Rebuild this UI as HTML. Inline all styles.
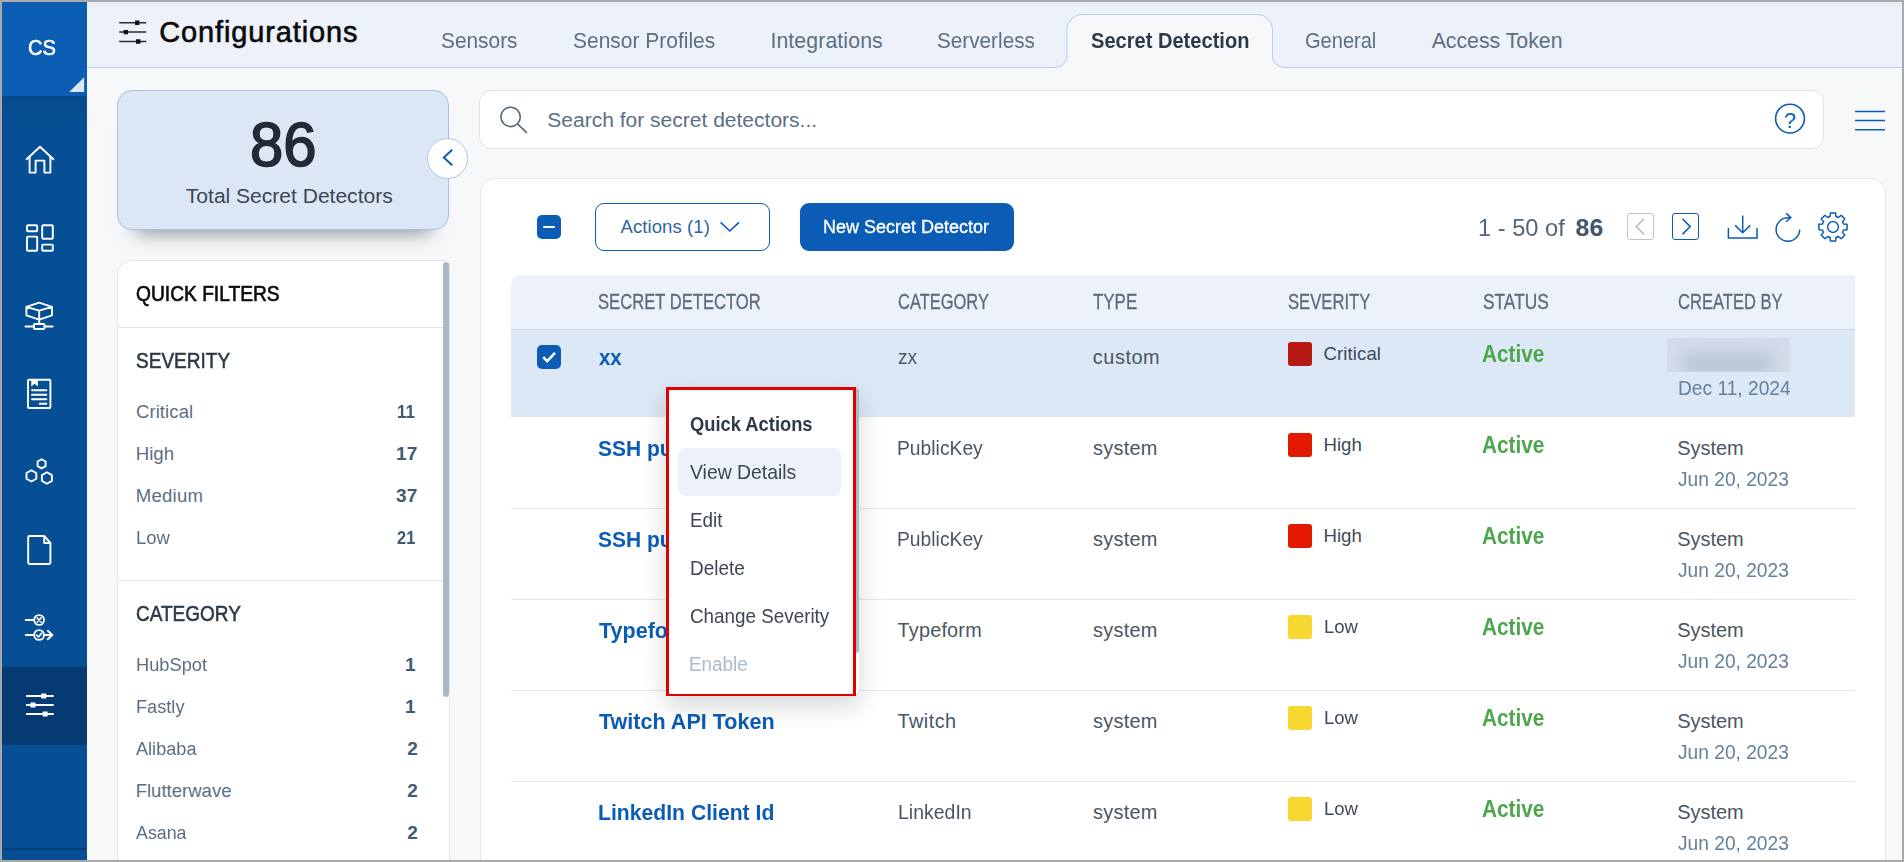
<!DOCTYPE html>
<html lang="en"><head><meta charset="utf-8"><title>Configurations - Secret Detection</title>
<style>
*{box-sizing:border-box;margin:0;padding:0}
html,body{width:1904px;height:862px;overflow:hidden;background:#a9a9a9;font-family:"Liberation Sans",sans-serif}
#app{position:absolute;left:0;top:0;width:1904px;height:862px;background:#f7f8fa;clip-path:inset(2px);overflow:hidden}
#app div,#app span,#app svg{position:absolute}
.t{white-space:nowrap;line-height:1;transform-origin:0 50%}
/* sidebar */
#side{left:0;top:0;width:87px;height:862px;background:#074f94}
#brand{left:0;top:0;width:87px;height:96px;background:#0a5db3}
#brandsh{left:0;top:96px;width:87px;height:22px;background:linear-gradient(#064a8c,#074f94)}
#active{left:0;top:667px;width:87px;height:78px;background:#063a72}
#sideline{left:0;top:848px;width:87px;height:2px;background:#06407c}
.ico{fill:none;stroke:#fff;stroke-width:1.9;stroke-linecap:round;stroke-linejoin:round}
/* header */
#hdr{left:87px;top:0;width:1817px;height:68px;background:linear-gradient(#e6ebf3 2px,#edf2fa 8px);border-bottom:1px solid #b9d1ea}
/* left */
#stat{left:117px;top:90px;width:332px;height:140px;background:#dbe7f4;border:1px solid #a3c2e6;border-radius:15px;box-shadow:0 22px 18px -19px rgba(30,40,55,.5)}
#collapse{left:427px;top:138px;width:41px;height:41px;border-radius:50%;background:#fff;border:1px solid #a9c6e8}
#qf{left:117px;top:260px;width:333px;height:620px;background:#fff;border:1px solid #e3e8ec;border-radius:15px 0 0 0}
#qfthumb{left:443px;top:262px;width:6px;height:435px;background:#a9b9c6;border-radius:3px}
.hr{height:1px;background:#dfe5ea}
/* search */
#search{left:479px;top:90px;width:1345px;height:59px;background:#fff;border:1px solid #dde4ea;border-radius:12px}
/* card */
#card{left:480px;top:178px;width:1406px;height:720px;background:#fff;border:1px solid #e3e8ec;border-radius:16px}
#thead{left:511px;top:275px;width:1344px;height:55px;background:#edf2fa;border-radius:10px 0 0 0;border-bottom:1px solid #c2d6ec}
#rowsel{left:511px;top:330px;width:1344px;height:87px;background:#dce8f5}
.rl{left:511px;width:1344px;height:1px;background:#e4e9ed}
.sq{width:24px;height:24px;border-radius:3px}
/* popup */
#pop{left:666px;top:387px;width:193px;height:309px;background:#fff;border-radius:0 6px 8px 0;box-shadow:0 10px 24px rgba(30,40,50,.19)}
#popthumb{left:855px;top:388px;width:4px;height:265px;background:#abbac7;border-radius:0 3px 3px 0}
#popred{left:666px;top:387px;width:190px;height:309px;border:3px solid #e00000;border-bottom-width:2px}
#pophl{left:678px;top:448px;width:163px;height:48px;background:#edf2fa;border-radius:8px}
</style></head><body><div id="app">
<!-- SIDEBAR -->
<div id="side"></div><div id="brand"></div><div id="brandsh"></div><div id="active"></div><div id="sideline"></div>
<svg style="left:69px;top:77px" width="16" height="16" viewBox="0 0 16 16"><path d="M15.1 .2V15.1H.2Z" fill="#dce7f4"/></svg>
<svg class="ico" style="left:0;top:130px" width="87" height="600" viewBox="0 130 87 600">
<!-- home -->
<path d="M26.6 159.2L40 146.8L53.4 159.2"/><path d="M29.6 157V172.6H35.6V160.6H44.4V172.6H50.4V157"/>
<!-- dashboard -->
<rect x="27" y="225.2" width="10.2" height="6" rx="1"/><rect x="27" y="236.6" width="10.2" height="14.2" rx="1"/><rect x="42.2" y="225.2" width="10.6" height="13.6" rx="1"/><rect x="42.2" y="244.6" width="10.6" height="6.2" rx="1"/>
<!-- network cube -->
<path d="M39.2 302.6L52 306.8V315.4L39.2 319.6L26.4 315.4V306.8ZM26.4 306.8L39.2 310.6L52 306.8M39.2 310.6V324"/><path d="M25.6 326.5H33.8M44.6 326.5H52.6"/><rect x="33.9" y="324" width="10.6" height="5" rx="1"/>
<!-- document -->
<rect x="28" y="379.8" width="22.4" height="28.2" rx="1"/><path d="M31.3 380V386.6L34.6 383.8L37.9 386.6V380Z" fill="#fff" stroke="none"/><path d="M32 390.2H46.4M32 394.8H46.4M32 399.2H46.4M39.8 403.8H46.4"/>
<!-- hexagons -->
<path d="M41.6 459.2L45.6 461.5V466.1L41.6 468.4L37.6 466.1V461.5Z"/><path d="M31.4 470.2L36.3 473V478.7L31.4 481.5L26.5 478.7V473Z"/><path d="M46.9 472.2L51.9 475.1V480.9L46.9 483.8L41.9 480.9V475.1Z"/>
<!-- file -->
<path d="M44.2 536H29.6Q28.2 536 28.2 537.4V562.6Q28.2 564 29.6 564H49Q50.4 564 50.4 562.6V543ZM44.2 536V543H50.4"/>
<!-- flow -->
<circle cx="39.1" cy="620" r="4.9"/><path d="M25.8 620H34.2"/><path d="M37.1 618L41.1 622M41.1 618L37.1 622" stroke-width="1.7"/>
<circle cx="39.1" cy="635" r="4.9"/><path d="M25.8 635H34.2M44 635H52.2M47.8 630.8L52.4 635L47.8 639.2"/><path d="M36.8 635.2L38.5 637L41.6 633.2" stroke-width="1.6"/>
<!-- sliders -->
<path d="M26.8 696H53M26.8 705H53M26.8 714H53"/><path d="M41.2 693.5h5v5h-5zM30.5 702.5h5v5h-5zM42.7 711.5h5v5h-5z" fill="#fff" stroke="none"/>
</svg>
<!-- HEADER -->
<div id="hdr"></div>
<svg style="left:117px;top:18px" width="32" height="28" viewBox="117 18 32 28"><path d="M119.2 22.7H146.2M119.2 32.1H146.2M119.2 41.5H146.2" stroke="#2a2a2a" stroke-width="1.5" fill="none"/><path d="M135 20.5h4.4v4.4H135zM123.6 29.9h4.4v4.4h-4.4zM136 39.3h4.4v4.4H136z" fill="#111"/></svg>
<!-- active tab shape -->
<svg style="left:1040px;top:10px" width="260" height="60" viewBox="1040 10 260 60"><path d="M1054 67.500A13 10.500 0 0 0 1067 57V29.500A15 15 0 0 1 1082 14.500H1257.500A15 15 0 0 1 1272.500 29.500V57A13 10.500 0 0 0 1285.500 67.500V70H1054Z" fill="#f7f8fa"/><path d="M1053 67.500H1054A13 10.500 0 0 0 1067 57V29.500A15 15 0 0 1 1082 14.500H1257.500A15 15 0 0 1 1272.500 29.500V57A13 10.500 0 0 0 1285.500 67.500H1287" fill="none" stroke="#b3cdea" stroke-width="1"/></svg>
<!-- LEFT PANEL -->
<div id="stat"></div>
<div id="collapse"></div>
<svg style="left:437px;top:145px" width="22" height="26" viewBox="437 145 22 26"><path d="M452.2 149.7L443.8 157.5L452.2 165.3" fill="none" stroke="#0b5cb5" stroke-width="2"/></svg>
<div id="qf"></div>
<div id="qfthumb"></div>
<div class="hr" style="left:118px;top:327px;width:325px"></div>
<div class="hr" style="left:118px;top:580px;width:325px"></div>
<!-- SEARCH -->
<div id="search"></div>
<svg style="left:496px;top:102px" width="36" height="36" viewBox="496 102 36 36"><circle cx="510.600" cy="116.900" r="9.700" fill="none" stroke="#52667a" stroke-width="1.600"/><path d="M517.500 123.800L526.900 132.800" stroke="#52667a" stroke-width="1.600" fill="none"/></svg>
<svg style="left:1772px;top:101px" width="36" height="36" viewBox="1772 101 36 36"><circle cx="1790" cy="118.6" r="14.4" fill="none" stroke="#0b5cb5" stroke-width="1.6"/></svg>
<svg style="left:1853px;top:108px" width="34" height="26" viewBox="1853 108 34 26"><path d="M1855 111.500H1885M1855 120.500H1885M1855 129.700H1885" stroke="#0b5cb5" stroke-width="1.600" fill="none"/></svg>
<!-- CARD -->
<div id="card"></div>
<div style="left:537px;top:215px;width:24px;height:24px;border-radius:5px;background:#0b5cb5"></div>
<div style="left:543px;top:226px;width:12px;height:2.400px;background:#fff;border-radius:1px"></div>
<div style="left:595px;top:203px;width:175px;height:48px;border:1.500px solid #0b5cb5;border-radius:9px;background:#fff"></div>
<svg style="left:718px;top:218px" width="24" height="18" viewBox="718 218 24 18"><path d="M720.600 222.400L729.800 231L739 222.400" fill="none" stroke="#0b5cb5" stroke-width="1.600"/></svg>
<div style="left:800px;top:203px;width:214px;height:48px;border-radius:9px;background:#0b5cb5"></div>
<div style="left:1627px;top:213px;width:27px;height:27px;border:1.500px solid #b9c6d0;border-radius:3px"></div>
<svg style="left:1627px;top:213px" width="27" height="27" viewBox="0 0 27 27"><path d="M17 5.800L9.200 13.600L17 21.400" fill="none" stroke="#b0bec9" stroke-width="1.500"/></svg>
<div style="left:1672px;top:213px;width:27px;height:27px;border:1.500px solid #0b5cb5;border-radius:3px"></div>
<svg style="left:1672px;top:213px" width="27" height="27" viewBox="0 0 27 27"><path d="M10.400 5.800L18.200 13.600L10.400 21.400" fill="none" stroke="#0b5cb5" stroke-width="1.500"/></svg>
<!-- download -->
<svg style="left:1724px;top:210px" width="36" height="34" viewBox="1724 210 36 34"><path d="M1728.400 228V238H1757V228M1742.700 215.400V232.600M1735.200 225.400L1742.700 232.800L1750.200 225.400" fill="none" stroke="#0b5cb5" stroke-width="1.500"/></svg>
<!-- refresh -->
<svg style="left:1772px;top:210px" width="34" height="36" viewBox="1772 210 34 36"><path d="M1799.700 229.500A11.800 11.800 0 1 1 1787.900 217.700H1790.200M1786.200 213.400L1790.800 217.600L1786.200 221.800" fill="none" stroke="#0b5cb5" stroke-width="1.500"/></svg>
<!-- gear -->
<svg id="gear" style="left:1816px;top:210px" width="34" height="34" viewBox="-17 -17 34 34"><circle r="5.4" fill="none" stroke="#0b5cb5" stroke-width="1.500"/><path d="M-2.91 -10.51L-2.63 -14.06L2.63 -14.06L2.91 -10.51A10.9 10.9 0 0 1 5.37 -9.48L8.08 -11.80L11.80 -8.08L9.48 -5.37A10.9 10.9 0 0 1 10.51 -2.91L14.06 -2.63L14.06 2.63L10.51 2.91A10.9 10.9 0 0 1 9.48 5.37L11.80 8.08L8.08 11.80L5.37 9.48A10.9 10.9 0 0 1 2.91 10.51L2.63 14.06L-2.63 14.06L-2.91 10.51A10.9 10.9 0 0 1 -5.37 9.48L-8.08 11.80L-11.80 8.08L-9.48 5.37A10.9 10.9 0 0 1 -10.51 2.91L-14.06 2.63L-14.06 -2.63L-10.51 -2.91A10.9 10.9 0 0 1 -9.48 -5.37L-11.80 -8.08L-8.08 -11.80L-5.37 -9.48A10.9 10.9 0 0 1 -2.91 -10.51Z" fill="none" stroke="#0b5cb5" stroke-width="1.500" stroke-linejoin="round"/></svg>
<!-- TABLE -->
<div id="thead"></div><div id="rowsel"></div>
<div style="left:537px;top:345px;width:24px;height:24px;border-radius:5px;background:#0b5cb5"></div>
<svg style="left:537px;top:345px" width="24" height="24" viewBox="0 0 24 24"><path d="M6.200 12.200L10.200 16.200L18 7.800" fill="none" stroke="#fff" stroke-width="2.600"/></svg>
<!-- ROW SHAPES -->
<div class="sq" style="left:1288px;top:342px;background:#b71a15"></div>
<div style="left:1667px;top:338px;width:123px;height:34px;background:#d2dde9;overflow:hidden"><div style="left:14px;top:14px;width:92px;height:22px;background:#bac7d5;filter:blur(7px);border-radius:10px"></div></div>
<div class="sq" style="left:1288px;top:433px;background:#e11900"></div>
<div class="rl" style="top:508px"></div>
<div class="sq" style="left:1288px;top:524px;background:#e11900"></div>
<div class="rl" style="top:599px"></div>
<div class="sq" style="left:1288px;top:615px;background:#f8d830"></div>
<div class="rl" style="top:690px"></div>
<div class="sq" style="left:1288px;top:706px;background:#f8d830"></div>
<div class="rl" style="top:781px"></div>
<div class="sq" style="left:1288px;top:797px;background:#f8d830"></div>
<!-- TEXT -->
<span class="t" id="cs" style="left:27.9px;top:37px;font-size:21.84px;color:#fff;-webkit-text-stroke:0.6px #fff;transform:scaleX(0.922)">CS</span>
<span class="t" id="title" style="left:159.15px;top:18px;font-size:28.96px;color:#0a0a0a;-webkit-text-stroke:0.6px #0a0a0a;letter-spacing:0.904px">Configurations</span>
<span class="t" id="tb1" style="left:441.15px;top:31px;font-size:21.29px;color:#5c6f82;transform:scaleX(0.98)">Sensors</span>
<span class="t" id="tb2" style="left:573.15px;top:31px;font-size:21.29px;color:#5c6f82;transform:scaleX(0.986)">Sensor Profiles</span>
<span class="t" id="tb3" style="left:770.4px;top:31px;font-size:21.25px;color:#5c6f82;letter-spacing:0.114px">Integrations</span>
<span class="t" id="tb4" style="left:937.15px;top:31px;font-size:21.26px;color:#5c6f82;transform:scaleX(0.975)">Serverless</span>
<span class="t" id="tb5" style="left:1091.28px;top:31px;font-size:21.28px;color:#2c3a49;font-weight:bold;transform:scaleX(0.944)">Secret Detection</span>
<span class="t" id="tb6" style="left:1304.65px;top:31px;font-size:21.29px;color:#5c6f82;transform:scaleX(0.942)">General</span>
<span class="t" id="tb7" style="left:1431.65px;top:31px;font-size:21.32px;color:#5c6f82;letter-spacing:-0.023px">Access Token</span>
<span class="t" id="n86" style="left:250.1px;top:113px;font-size:63.04px;color:#222b33;-webkit-text-stroke:1.7px #222b33;transform:scaleX(0.947)">86</span>
<span class="t" id="tsd" style="left:185.85px;top:185px;font-size:21.09px;color:#3b4654;letter-spacing:-0.024px">Total Secret Detectors</span>
<span class="t" id="qft" style="left:135.6px;top:283px;font-size:21.78px;color:#0c0c0c;-webkit-text-stroke:0.65px #0c0c0c;transform:scaleX(0.882)">QUICK FILTERS</span>
<span class="t" id="sevh" style="left:135.65px;top:350px;font-size:21.63px;color:#2c3a48;-webkit-text-stroke:0.55px #2c3a48;transform:scaleX(0.88)">SEVERITY</span>
<span class="t" id="cath" style="left:135.6px;top:603px;font-size:21.63px;color:#2c3a48;-webkit-text-stroke:0.55px #2c3a48;transform:scaleX(0.879)">CATEGORY</span>
<span class="t" id="f0" style="left:135.95px;top:403px;font-size:18.57px;color:#5c6f82;letter-spacing:0.071px">Critical</span>
<span class="t" id="g0" style="left:396.55px;top:402px;font-size:19.05px;color:#425b74;font-weight:bold;transform:scaleX(0.892)">11</span>
<span class="t" id="f1" style="left:135.7px;top:445px;font-size:18.64px;color:#5c6f82">High</span>
<span class="t" id="g1" style="left:396.05px;top:444px;font-size:19.05px;color:#425b74;font-weight:bold;transform:scaleX(1)">17</span>
<span class="t" id="f2" style="left:135.7px;top:487px;font-size:18.59px;color:#5c6f82;letter-spacing:0.25px">Medium</span>
<span class="t" id="g2" style="left:396.05px;top:486px;font-size:19.05px;color:#425b74;font-weight:bold;transform:scaleX(1)">37</span>
<span class="t" id="f3" style="left:135.95px;top:529px;font-size:18.68px;color:#5c6f82;transform:scaleX(0.992)">Low</span>
<span class="t" id="g3" style="left:396.8px;top:528px;font-size:19.05px;color:#425b74;font-weight:bold;transform:scaleX(0.863)">21</span>
<span class="t" id="f4" style="left:135.95px;top:656px;font-size:18.66px;color:#5c6f82;transform:scaleX(0.979)">HubSpot</span>
<span class="t" id="g4" style="left:405.1px;top:655px;font-size:19.05px;color:#425b74;font-weight:bold">1</span>
<span class="t" id="f5" style="left:135.95px;top:698px;font-size:18.59px;color:#5c6f82;transform:scaleX(0.979)">Fastly</span>
<span class="t" id="g5" style="left:405.1px;top:697px;font-size:19.05px;color:#425b74;font-weight:bold">1</span>
<span class="t" id="f6" style="left:135.7px;top:740px;font-size:18.58px;color:#5c6f82;transform:scaleX(0.976)">Alibaba</span>
<span class="t" id="g6" style="left:407.35px;top:739px;font-size:19.05px;color:#425b74;font-weight:bold">2</span>
<span class="t" id="f7" style="left:135.7px;top:782px;font-size:18.55px;color:#5c6f82">Flutterwave</span>
<span class="t" id="g7" style="left:407.35px;top:781px;font-size:19.05px;color:#425b74;font-weight:bold">2</span>
<span class="t" id="f8" style="left:135.7px;top:824px;font-size:18.61px;color:#5c6f82;transform:scaleX(0.957)">Asana</span>
<span class="t" id="g8" style="left:407.35px;top:823px;font-size:19.05px;color:#425b74;font-weight:bold">2</span>
<span class="t" id="srch" style="left:547.3px;top:109px;font-size:21.02px;color:#5c6f82">Search for secret detectors...</span>
<span class="t" id="q" style="left:1784.2px;top:110px;font-size:21.8px;color:#0b5cb5;transform:scaleX(1.001)">?</span>
<span class="t" id="act" style="left:620.45px;top:218px;font-size:18.51px;color:#2f64a3;letter-spacing:0.1px">Actions (1)</span>
<span class="t" id="nsd" style="left:823.05px;top:218px;font-size:18.23px;color:#fff;-webkit-text-stroke:0.35px #fff;transform:scaleX(0.988)">New Secret Detector</span>
<span class="t" id="pg1" style="left:1477.8px;top:216px;font-size:24.36px;color:#52667a;transform:scaleX(0.971)">1 - 50 of</span>
<span class="t" id="pg2" style="left:1575.5px;top:216px;font-size:24.72px;color:#44566a;font-weight:bold;letter-spacing:0.25px">86</span>
<span class="t" id="h1" style="left:597.85px;top:291px;font-size:21.91px;color:#5c6b7a;-webkit-text-stroke:0.3px #5c6b7a;transform:scaleX(0.758)">SECRET DETECTOR</span>
<span class="t" id="h2" style="left:898.35px;top:291px;font-size:21.91px;color:#5c6b7a;-webkit-text-stroke:0.3px #5c6b7a;transform:scaleX(0.752)">CATEGORY</span>
<span class="t" id="h3" style="left:1092.6px;top:291px;font-size:21.91px;color:#5c6b7a;-webkit-text-stroke:0.3px #5c6b7a;transform:scaleX(0.772)">TYPE</span>
<span class="t" id="h4" style="left:1287.85px;top:291px;font-size:21.91px;color:#5c6b7a;-webkit-text-stroke:0.3px #5c6b7a;transform:scaleX(0.76)">SEVERITY</span>
<span class="t" id="h5" style="left:1482.85px;top:291px;font-size:21.91px;color:#5c6b7a;-webkit-text-stroke:0.3px #5c6b7a;transform:scaleX(0.791)">STATUS</span>
<span class="t" id="h6" style="left:1678.35px;top:291px;font-size:21.91px;color:#5c6b7a;-webkit-text-stroke:0.3px #5c6b7a;transform:scaleX(0.756)">CREATED BY</span>
<span class="t" id="n0" style="left:598.58px;top:347px;font-size:22.5px;color:#0b5cb5;font-weight:bold;transform:scaleX(0.908)">xx</span>
<span class="t" id="c0" style="left:897.85px;top:348px;font-size:19.75px;color:#4a5662;transform:scaleX(0.973)">zx</span>
<span class="t" id="y0" style="left:1092.8px;top:348px;font-size:19.9px;color:#4a5662;letter-spacing:0.55px">custom</span>
<span class="t" id="s0" style="left:1323.5px;top:345px;font-size:18.57px;color:#3f4a55;letter-spacing:0.107px">Critical</span>
<span class="t" id="a0" style="left:1481.9px;top:343px;font-size:23.72px;color:#4ca64c;font-weight:bold;transform:scaleX(0.875)">Active</span>
<span class="t" id="d0" style="left:1677.85px;top:379px;font-size:19.91px;color:#65809a;transform:scaleX(0.963)">Dec 11, 2024</span>
<span class="t" id="n1" style="left:597.95px;top:437px;font-size:22.67px;color:#0b5cb5;font-weight:bold;transform:scaleX(0.925)">SSH public key</span>
<span class="t" id="c1" style="left:897.22px;top:439px;font-size:19.88px;color:#4a5662;transform:scaleX(0.971)">PublicKey</span>
<span class="t" id="y1" style="left:1093.05px;top:439px;font-size:19.9px;color:#4a5662;letter-spacing:0.25px">system</span>
<span class="t" id="s1" style="left:1323.5px;top:436px;font-size:18.64px;color:#3f4a55">High</span>
<span class="t" id="a1" style="left:1481.9px;top:434px;font-size:23.72px;color:#4ca64c;font-weight:bold;transform:scaleX(0.875)">Active</span>
<span class="t" id="b1" style="left:1677.25px;top:438px;font-size:20px;color:#4a5662;letter-spacing:-0.05px">System</span>
<span class="t" id="d1" style="left:1677.6px;top:470px;font-size:19.91px;color:#65809a;transform:scaleX(0.963)">Jun 20, 2023</span>
<span class="t" id="n2" style="left:597.95px;top:528px;font-size:22.67px;color:#0b5cb5;font-weight:bold;transform:scaleX(0.925)">SSH public key</span>
<span class="t" id="c2" style="left:897.22px;top:530px;font-size:19.88px;color:#4a5662;transform:scaleX(0.971)">PublicKey</span>
<span class="t" id="y2" style="left:1093.05px;top:530px;font-size:19.9px;color:#4a5662;letter-spacing:0.25px">system</span>
<span class="t" id="s2" style="left:1323.5px;top:527px;font-size:18.64px;color:#3f4a55">High</span>
<span class="t" id="a2" style="left:1481.9px;top:525px;font-size:23.72px;color:#4ca64c;font-weight:bold;transform:scaleX(0.875)">Active</span>
<span class="t" id="b2" style="left:1677.25px;top:529px;font-size:20px;color:#4a5662;letter-spacing:-0.05px">System</span>
<span class="t" id="d2" style="left:1677.6px;top:561px;font-size:19.91px;color:#65809a;transform:scaleX(0.963)">Jun 20, 2023</span>
<span class="t" id="n3" style="left:598.7px;top:619px;font-size:22.71px;color:#0b5cb5;font-weight:bold;transform:scaleX(0.949)">Typeform API Token</span>
<span class="t" id="c3" style="left:897.6px;top:621px;font-size:19.82px;color:#4a5662;letter-spacing:0.214px">Typeform</span>
<span class="t" id="y3" style="left:1093.05px;top:621px;font-size:19.9px;color:#4a5662;letter-spacing:0.25px">system</span>
<span class="t" id="s3" style="left:1323.75px;top:618px;font-size:18.68px;color:#3f4a55;transform:scaleX(0.992)">Low</span>
<span class="t" id="a3" style="left:1481.9px;top:616px;font-size:23.72px;color:#4ca64c;font-weight:bold;transform:scaleX(0.875)">Active</span>
<span class="t" id="b3" style="left:1677.25px;top:620px;font-size:20px;color:#4a5662;letter-spacing:-0.05px">System</span>
<span class="t" id="d3" style="left:1677.6px;top:652px;font-size:19.91px;color:#65809a;transform:scaleX(0.963)">Jun 20, 2023</span>
<span class="t" id="n4" style="left:598.7px;top:710px;font-size:22.74px;color:#0b5cb5;font-weight:bold;transform:scaleX(0.948)">Twitch API Token</span>
<span class="t" id="c4" style="left:897.6px;top:712px;font-size:19.85px;color:#4a5662;letter-spacing:0.45px">Twitch</span>
<span class="t" id="y4" style="left:1093.05px;top:712px;font-size:19.9px;color:#4a5662;letter-spacing:0.25px">system</span>
<span class="t" id="s4" style="left:1323.75px;top:709px;font-size:18.68px;color:#3f4a55;transform:scaleX(0.992)">Low</span>
<span class="t" id="a4" style="left:1481.9px;top:707px;font-size:23.72px;color:#4ca64c;font-weight:bold;transform:scaleX(0.875)">Active</span>
<span class="t" id="b4" style="left:1677.25px;top:711px;font-size:20px;color:#4a5662;letter-spacing:-0.05px">System</span>
<span class="t" id="d4" style="left:1677.6px;top:743px;font-size:19.91px;color:#65809a;transform:scaleX(0.963)">Jun 20, 2023</span>
<span class="t" id="n5" style="left:598.2px;top:801px;font-size:22.67px;color:#0b5cb5;font-weight:bold;transform:scaleX(0.934)">LinkedIn Client Id</span>
<span class="t" id="c5" style="left:897.85px;top:803px;font-size:19.9px;color:#4a5662;transform:scaleX(0.979)">LinkedIn</span>
<span class="t" id="y5" style="left:1093.05px;top:803px;font-size:19.9px;color:#4a5662;letter-spacing:0.25px">system</span>
<span class="t" id="s5" style="left:1323.75px;top:800px;font-size:18.68px;color:#3f4a55;transform:scaleX(0.992)">Low</span>
<span class="t" id="a5" style="left:1481.9px;top:798px;font-size:23.72px;color:#4ca64c;font-weight:bold;transform:scaleX(0.875)">Active</span>
<span class="t" id="b5" style="left:1677.25px;top:802px;font-size:20px;color:#4a5662;letter-spacing:-0.05px">System</span>
<span class="t" id="d5" style="left:1677.6px;top:834px;font-size:19.91px;color:#65809a;transform:scaleX(0.963)">Jun 20, 2023</span>
<!-- POPUP -->
<div id="pop"></div><div id="popthumb"></div><div id="pophl"></div>
<span class="t" id="p0" style="left:689.9px;top:415px;font-size:19.7px;color:#2c3a49;font-weight:bold;transform:scaleX(0.931)">Quick Actions</span>
<span class="t" id="p1" style="left:689.95px;top:463px;font-size:19.61px;color:#3c4753;transform:scaleX(0.988)">View Details</span>
<span class="t" id="p2" style="left:689.85px;top:511px;font-size:19.65px;color:#3c4753;transform:scaleX(0.961)">Edit</span>
<span class="t" id="p3" style="left:689.85px;top:559px;font-size:19.6px;color:#3c4753;transform:scaleX(0.968)">Delete</span>
<span class="t" id="p4" style="left:689.9px;top:607px;font-size:19.58px;color:#3c4753;transform:scaleX(0.962)">Change Severity</span>
<span class="t" id="p5" style="left:689.22px;top:655px;font-size:19.6px;color:#a9bccb;transform:scaleX(0.962)">Enable</span>
<div id="popred"></div>
</div></body></html>
